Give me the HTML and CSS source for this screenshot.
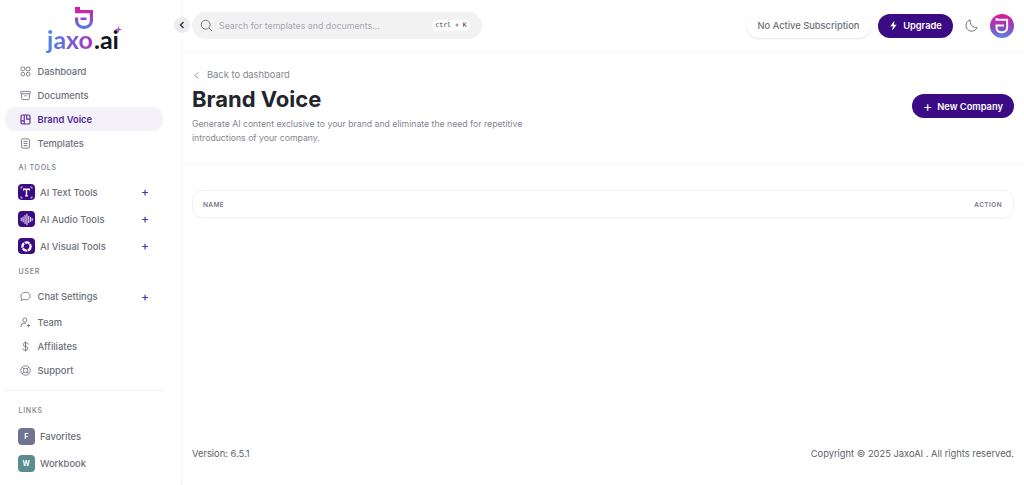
FILE: index.html
```html
<!DOCTYPE html>
<html lang="en">
<head>
<meta charset="utf-8">
<title>Brand Voice</title>
<link rel="stylesheet" href="styles.css">
</head>
<body>
<svg width="0" height="0" class="defs">
  <defs>
    <linearGradient id="lg" x1="0" y1="0" x2="0" y2="1"><stop offset="0" stop-color="#e0149a"/><stop offset=".5" stop-color="#9a45c4"/><stop offset="1" stop-color="#4f7fe8"/></linearGradient>
  </defs>
</svg>
<div class="app">
  <aside class="sidebar">
    <div class="logo">
      <svg class="logo-mark" width="18" height="22" viewBox="0 0 18 22" fill="none"><path d="M0 0H5V3H16.500V3H18V13.500A8.500 8.500 0 0 1 9.500 22H8.500A8.500 8.500 0 0 1 0 13.500V10.500H3.200V13.500A5.300 5.300 0 0 0 8.500 18.800H9.500A5.300 5.300 0 0 0 14.800 13.500V6.300H0Z" fill="url(#lg)"/><path d="M5.500 10.500H11.500V13H5.500Z" fill="#9a45c4"/></svg>
      <div class="logo-text"><span class="logo-jaxo">jaxo</span><span class="logo-ai">.ai</span><svg class="logo-star" viewBox="0 0 10 10"><path d="M5 0 6.200 3.800 10 5 6.200 6.200 5 10 3.800 6.200 0 5 3.800 3.800Z"/></svg></div>
    </div>
    <nav class="nav">
      <a class="item"><svg class="ic" viewBox="0 0 16 16"><rect x="1.500" y="1.500" width="5.300" height="5.300" rx="1.600"/><rect x="9.200" y="1.500" width="5.300" height="5.300" rx="1.600"/><rect x="1.500" y="9.200" width="5.300" height="5.300" rx="2.600"/><rect x="9.200" y="9.200" width="5.300" height="5.300" rx="2.600"/></svg>Dashboard</a>
      <a class="item"><svg class="ic" viewBox="0 0 16 16"><rect x="1" y="2" width="14" height="3.400" rx=".8"/><path d="M2.500 5.400V12.800a1.200 1.200 0 0 0 1.200 1.200h8.600a1.200 1.200 0 0 0 1.200-1.200V5.400M6.300 8.500h3.400"/></svg>Documents</a>
      <a class="item active"><svg class="ic" viewBox="0 0 16 16"><rect x="1.500" y="1.500" width="13" height="13" rx="2"/><path d="M6.200 1.500V14.500M6.200 10H1.500M9.800 1.500V7.500H14.500"/></svg>Brand Voice</a>
      <a class="item"><svg class="ic" viewBox="0 0 16 16"><rect x="2.300" y="1.300" width="11.400" height="13.400" rx="1.600"/><path d="M5.200 5h5.600M5.200 8h5.600M5.200 11h5.600"/></svg>Templates</a>
    </nav>
    <div class="label label-tools">AI TOOLS</div>
    <nav class="nav nav-tools">
      <a class="item tool"><span class="badge purple"><svg class="gl" viewBox="0 0 16 16"><path d="M4.500 5.500V4h7v1.500M8 4v8.200M6.300 12.200h3.400" stroke-width="1.700"/><path d="M1.200 3.500V1.200h2.300M12.500 1.200h2.300v2.300M1.200 12.500v2.300h2.300M12.500 14.800h2.300v-2.300" stroke-width=".8"/></svg></span>AI Text Tools<span class="plus">+</span></a>
      <a class="item tool"><span class="badge purple"><svg class="gl" viewBox="0 0 16 16"><path d="M1.500 6.500v3M3.800 5v6M6.200 3v10M8.500 1.500v13M10.800 4v8M13.100 5.500v5M15 7v2" stroke-width="1.200" stroke-linecap="round"/></svg></span>AI Audio Tools<span class="plus">+</span></a>
      <a class="item tool"><span class="badge purple"><svg class="gl" viewBox="0 0 16 16"><circle cx="8" cy="8" r="5" stroke-width="2.800" stroke-dasharray="6 .9"/></svg></span>AI Visual Tools<span class="plus">+</span></a>
    </nav>
    <div class="label label-user">USER</div>
    <nav class="nav nav-user">
      <a class="item chat"><svg class="ic" viewBox="0 0 16 16"><path d="M8.300 1.800c3.600 0 6.400 2.400 6.400 5.500s-2.800 5.500-6.400 5.500c-1 0-1.900-.2-2.700-.5L1.600 14l1-3.300C1.800 9.700 1.300 8.600 1.300 7.300c0-3.100 3.400-5.500 7-5.500z"/></svg>Chat Settings<span class="plus">+</span></a>
      <a class="item"><svg class="ic" viewBox="0 0 16 16"><circle cx="7" cy="4.500" r="3"/><path d="M1.500 14.500v-1.300A4 4 0 0 1 5.500 9.200h3M12.500 10v5M10 12.500h5"/></svg>Team</a>
      <a class="item"><svg class="ic" viewBox="0 0 16 16"><path d="M12 5a3 3 0 0 0-3-2.500H7.200a2.800 2.800 0 0 0 0 5.500h1.600a2.800 2.800 0 0 1 0 5.500H7a3 3 0 0 1-3-2.500M8 .5v15"/></svg>Affiliates</a>
      <a class="item"><svg class="ic" viewBox="0 0 16 16"><circle cx="8" cy="8" r="6.800"/><circle cx="8" cy="8" r="3.100"/><path d="M3.200 3.200l2.600 2.600M12.800 3.200l-2.600 2.600M3.200 12.800l2.600-2.600M12.800 12.800l-2.600-2.600"/></svg>Support</a>
    </nav>
    <hr class="rule rule-links">
    <div class="label label-links">LINKS</div>
    <nav class="nav nav-links">
      <a class="item tool"><span class="badge slate">F</span>Favorites</a>
      <a class="item tool"><span class="badge teal">W</span>Workbook</a>
    </nav>
    <hr class="rule rule-end">
  </aside>
  <main class="main">
    <button class="collapse" aria-label="Collapse"><svg width="8" height="10" viewBox="0 0 8 10" fill="none"><path d="M5.500 2 2.500 5l3 3" stroke="#33363f" stroke-width="1.400"/></svg></button>
    <header class="topbar">
      <div class="search">
        <svg class="search-ic" viewBox="0 0 16 16"><circle cx="7" cy="7" r="5.500"/><path d="m11 11 4 4"/></svg>
        <span class="search-text">Search for templates and documents...</span>
        <kbd class="kbd">ctrl + K</kbd>
      </div>
      <div class="top-actions">
        <span class="sub">No Active Subscription</span>
        <a class="btn upgrade"><svg class="bolt" viewBox="0 0 12 14"><path d="M7.200 .5 1.800 8h3.400L4.200 13.500 10.200 6H6.600z"/></svg>Upgrade</a>
        <svg class="moon" viewBox="0 0 16 16"><path d="M6.500 1.200a7 7 0 1 0 8.300 9.300A7.500 7.500 0 0 1 6.500 1.200z"/></svg>
        <span class="avatar"><svg width="14" height="16" viewBox="0 0 14 16" fill="none"><path d="M1.500 0V1.800H12.200V9.500a4.800 4.800 0 0 1-4.800 4.800H6A5 5 0 0 1 1.500 9.500V7.500H9" stroke="#fff" stroke-width="1.900"/></svg></span>
      </div>
    </header>
    <section class="head">
      <div class="head-left">
        <a class="back"><svg width="7" height="9" viewBox="0 0 7 9" fill="none"><path d="M5 1.500 2 4.500l3 3" stroke="#8a8d97"/></svg>Back to dashboard</a>
        <h1 class="title">Brand Voice</h1>
        <p class="desc">Generate AI content exclusive to your brand and eliminate the need for repetitive introductions of your company.</p>
      </div>
      <a class="btn new"><span class="new-plus">+</span>New Company</a>
    </section>
    <section class="table-wrap">
      <div class="table-head"><span>NAME</span><span>ACTION</span></div>
    </section>
    <footer class="foot"><span>Version: 6.5.1</span><span>Copyright © 2025 JaxoAI . All rights reserved.</span></footer>
  </main>
</div>
</body>
</html>
```
FILE: styles.css
```css
* { box-sizing: border-box; }
html, body { margin: 0; height: 485px; overflow: hidden; background: #fff; }
body { font-family: Inter, "Noto Sans", sans-serif; color: #20232b; }
.defs { position: absolute; }
.app { display: grid; grid-template-columns: 182px 1fr; height: 485px; }
.sidebar { border-right: 1px dotted #eeeef0; padding: 7px 18px 0 5px; height: 485px; overflow: hidden; }
.logo { display: flex; flex-direction: column; align-items: center; height: 52px; }
.logo-mark { display: block; }
.logo-text { font-family: Lato, Inter, sans-serif; font-size: 25px; font-weight: 700; line-height: 22px; display: flex; margin-top: -1px; margin-left: -3px; position: relative; }
.logo-jaxo { background: linear-gradient(100deg, #3f8cf0, #6f63dc 45%, #b42cb8 100%); -webkit-background-clip: text; background-clip: text; color: transparent; padding: 0 1px 8px 1px; margin-bottom: -8px; }
.logo-ai { color: #15161b; }
.logo-star { position: absolute; right: -3px; top: -2px; width: 7px; height: 7px; fill: #b53fd0; }
.nav { display: flex; flex-direction: column; }
.item { display: flex; align-items: center; height: 24px; padding-left: 15px; font-size: 9.400px; font-weight: 500; color: #6c6f7a; border-radius: 10px; white-space: nowrap; }
.item.active { background: #f4f1f9; color: #4f2a9a; font-weight: 600; }
.ic { width: 11px; height: 11px; margin-right: 6.500px; margin-left: 0; fill: none; stroke: #71747f; stroke-width: 1.300; flex: none; }
.active .ic { stroke: #5b2da8; stroke-width: 1.700; }
.label { font-size: 7px; font-weight: 500; letter-spacing: .75px; color: #7a7d87; padding-left: 13.500px; line-height: 10px; }
.label-tools { margin-top: 8px; }
.nav-tools { margin-top: 5.500px; }
.nav-links { margin-top: 7px; }
.tool { height: 27px; padding-left: 13px; }
.badge { width: 16.500px; height: 16.500px; border-radius: 4px; margin-right: 5.500px; flex: none; display: flex; align-items: center; justify-content: center; font-size: 7px; font-weight: 700; color: #fff; }
.purple { background: #3c0a87; }
.slate { background: #6f7590; }
.teal { background: #5a8d8e; }
.gl { width: 13px; height: 13px; fill: none; stroke: #fff; }
.plus { margin-left: auto; margin-right: 14px; color: #5b2da8; font-size: 12px; font-weight: 500; line-height: 10px; }
.label-user { margin-top: 7.500px; }
.nav-user { margin-top: 6px; }
.chat { height: 27px; }
.rule { border: 0; border-top: 1px solid #f1f1f3; margin: 0; }
.rule-links { margin-top: 8px; }
.label-links { margin-top: 15px; }
.rule-end { margin-top: 8px; }
.main { position: relative; display: flex; flex-direction: column; height: 485px; min-width: 0; }
.collapse { position: absolute; left: -8px; top: 17px; width: 16px; height: 16px; padding: 0; border: 0; border-radius: 50%; background: #ececee; display: flex; align-items: center; justify-content: center; }
.topbar { height: 52px; border-bottom: 1px dotted #eeeef0; padding: 0 10px; display: flex; align-items: center; justify-content: space-between; }
.search { width: 290px; height: 27px; border-radius: 14px; background: #f2f2f3; display: flex; align-items: center; padding: 0 12px 0 8px; }
.search-ic { width: 13px; height: 13px; fill: none; stroke: #75787f; stroke-width: 1.200; margin-right: 6px; }
.search-text { font-size: 8.800px; color: #a6a8b2; flex: 1; white-space: nowrap; }
.kbd { font-family: "DejaVu Sans Mono", "Liberation Mono", monospace; font-size: 6.500px; color: #33363f; background: #fff; border-radius: 6px; height: 11px; line-height: 11px; width: 38px; text-align: center; white-space: nowrap; }
.top-actions { display: flex; align-items: center; }
.sub { font-size: 9.300px; font-weight: 500; color: #6c6f7a; height: 24px; line-height: 24px; width: 123px; text-align: center; border-radius: 12px; box-shadow: 0 1px 2px rgba(30,30,60,.12); white-space: nowrap; }
.btn { display: flex; align-items: center; justify-content: center; height: 24px; border-radius: 12px; background: #3a0b84; color: #fff; font-size: 9.300px; font-weight: 600; white-space: nowrap; }
.upgrade { width: 75px; margin-left: 8px; }
.bolt { width: 9px; height: 11px; fill: #fff; margin-right: 5px; }
.moon { width: 13px; height: 13px; margin-left: 12px; fill: none; stroke: #6c6f7a; stroke-width: 1.200; }
.avatar { width: 24px; height: 24px; margin-left: 12px; border-radius: 50%; background: linear-gradient(180deg, #e0149a, #8c4cc0 60%, #5a86e0); display: flex; align-items: center; justify-content: center; }
.head { height: 112px; border-bottom: 1px dotted #eeeef0; padding: 17px 10px 0; display: flex; justify-content: space-between; }
.head-left { width: 345px; }
.back { display: flex; align-items: center; gap: 7px; font-size: 9.350px; color: #85878f; line-height: 12px; }
.back svg { margin-left: 1px; }
.title { font-size: 22px; font-weight: 700; line-height: 26px; margin: 5px 0 5px; color: #22252c; }
.desc { font-size: 8.700px; line-height: 14px; margin: 0; color: #84868f; }
.new { width: 102px; margin-top: 25px; }
.new-plus { font-size: 14px; font-weight: 400; margin-right: 5px; line-height: 10px; }
.table-wrap { padding: 26px 10px 0; flex: 1; }
.table-head { height: 28px; border: 1px solid #f1f1f3; border-radius: 10px; display: flex; align-items: center; justify-content: space-between; padding: 1px 11px 0 10px; font-size: 6.500px; font-weight: 600; letter-spacing: .4px; color: #75788a; box-shadow: 0 1px 1px rgba(30,30,60,.02); }
.foot { height: 37px; padding: 0 10px; display: flex; justify-content: space-between; font-size: 9.340px; color: #5c5f68; line-height: 12px; }
```
